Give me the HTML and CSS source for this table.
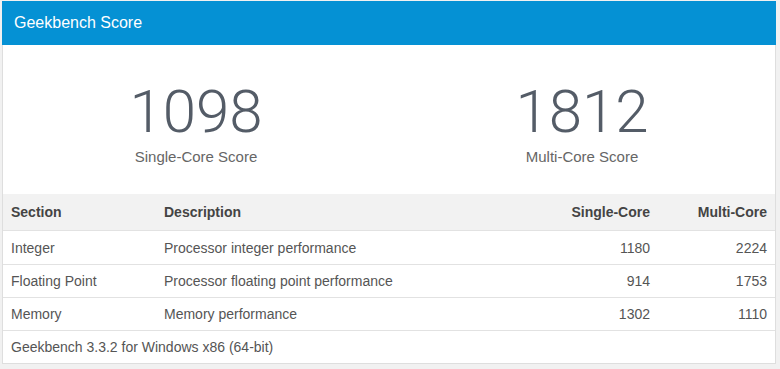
FILE: index.html
```html
<!DOCTYPE html>
<html>
<head>
<meta charset="utf-8">
<link rel="stylesheet" href="styles.css">
</head>
<body>
<div class="panel">
  <div class="panel-head">Geekbench Score</div>
  <div class="scores">
    <div class="score">
      <div class="score-num">1098</div>
      <div class="score-label">Single-Core Score</div>
    </div>
    <div class="score">
      <div class="score-num">1812</div>
      <div class="score-label">Multi-Core Score</div>
    </div>
  </div>
  <table class="results">
    <colgroup>
      <col class="c-sec"><col class="c-desc"><col class="c-sc"><col class="c-mc">
    </colgroup>
    <thead>
      <tr><th>Section</th><th>Description</th><th class="num">Single-Core</th><th class="num">Multi-Core</th></tr>
    </thead>
    <tbody>
      <tr><td>Integer</td><td>Processor integer performance</td><td class="num">1180</td><td class="num">2224</td></tr>
      <tr><td>Floating Point</td><td>Processor floating point performance</td><td class="num">914</td><td class="num">1753</td></tr>
      <tr><td>Memory</td><td>Memory performance</td><td class="num">1302</td><td class="num">1110</td></tr>
      <tr><td colspan="4">Geekbench 3.3.2 for Windows x86 (64-bit)</td></tr>
    </tbody>
  </table>
</div>
</body>
</html>
```
FILE: styles.css
```css
html, body {
  margin: 0;
  padding: 0;
}
body {
  background: #f1f1f1;
  padding: 1px 4px 6px 2px;
  font-family: "Liberation Sans", Arial, sans-serif;
  color: #555;
}
.panel {
  background: #fff;
  border: 1px solid #dedede;
  border-top: 0;
  width: 772px;
}
.panel-head {
  background: #0591d4;
  color: #fff;
  font-size: 16px;
  line-height: 20px;
  height: 44px;
  margin: 0 -1px;
  padding: 0 12px;
  display: flex;
  align-items: center;
}
.scores {
  display: grid;
  grid-template-columns: 1fr 1fr;
  padding: 36px 0 28px;
}
.score {
  text-align: center;
}
.score-num {
  font-family: Roboto, "Liberation Sans", sans-serif;
  font-weight: 300;
  font-size: 60px;
  line-height: 62px;
  color: #545c67;
}
.score-label {
  font-size: 15px;
  line-height: 18px;
  margin-top: 5px;
  color: #666;
}
.results {
  width: 772px;
  border-collapse: collapse;
  table-layout: fixed;
  font-size: 14px;
}
.c-sec { width: 153px; }
.c-desc { width: 402px; }
.c-sc { width: 100px; }
.c-mc { width: 117px; }
.results th {
  background: #f2f2f2;
  color: #444;
  font-weight: bold;
  text-align: left;
  height: 36px;
  padding: 0 8px;
  border-bottom: 1px solid #e2e2e2;
}
.results td {
  height: 32px;
  padding: 0 8px;
  border-bottom: 1px solid #e2e2e2;
  color: #555;
  white-space: nowrap;
}
.results tbody tr:first-child td {
  height: 33px;
}
.results tbody tr:last-child td {
  border-bottom: 0;
  height: 32px;
}
.results .num {
  text-align: right;
}
```
